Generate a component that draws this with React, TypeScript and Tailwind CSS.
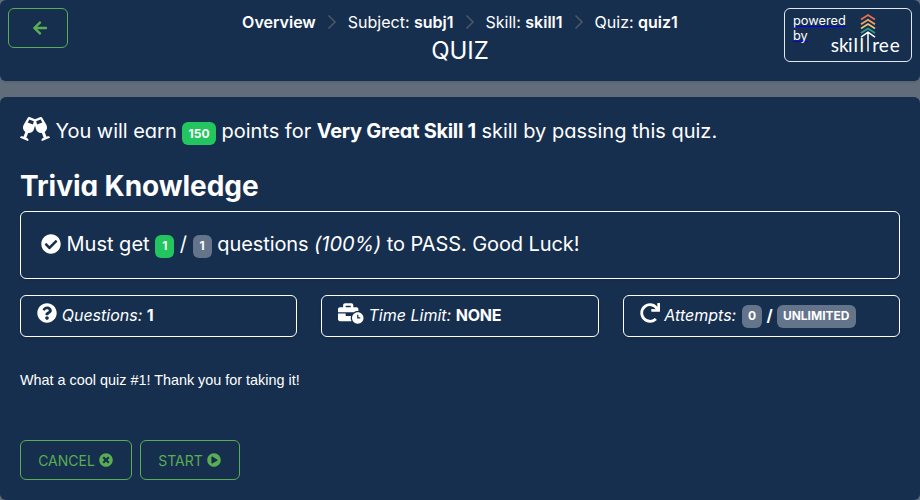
import type { ReactNode } from 'react';
import { FaArrowLeft, FaGlassCheers, FaCheckCircle, FaQuestionCircle, FaBusinessTime, FaRedo, FaTimesCircle, FaPlayCircle } from 'react-icons/fa';

function Separator() {
  return (
    <svg className="mx-[11px] h-4 w-[10px]" viewBox="0 0 10 16" fill="none" stroke="#4b5563" strokeWidth="1.7">
      <path d="M1.500 1.500 8 8l-6.500 6.500" />
    </svg>
  );
}

function Crumb({ label, value }: { label?: string; value: string }) {
  return (
    <span className="whitespace-pre">
      {label && `${label}: `}
      <span className="font-semibold">{value}</span>
    </span>
  );
}

function Badge({ children, color = 'bg-[#64748b]' }: { children: ReactNode; color?: string }) {
  return (
    <span className={`inline-flex h-[23px] min-w-[19px] items-center justify-center rounded-md px-[6.3px] text-xs font-bold tracking-normal ${color}`}>
      {children}
    </span>
  );
}

function Logo() {
  return (
    <svg className="h-[42px] w-[72px] shrink-0" viewBox="0 0 72 42" fill="none">
      <g strokeWidth="1.800">
        <path d="M31 6.500 38 2l7 4.500" stroke="#e76f51" />
        <path d="M31 11.200 38 6.700l7 4.500" stroke="#f4a261" />
        <path d="M31 15.600 38 11.100l7 4.500" stroke="#e9c46a" />
        <path d="M31 20 38 15.500l7 4.500" stroke="#2a9d8f" />
        <path d="M31 24.200 38 19.200l7 5M38 20v18.500" stroke="#fff" strokeWidth="1.500" />
      </g>
      <text x="0.800 9 18 23.500 29.500 42.300 48.800 59.800" y="38.500" fill="#fff" className="font-['Lato',sans-serif] text-[19px]">skillree</text>
    </svg>
  );
}

function InfoCard({ icon, label, children }: { icon: ReactNode; label: string; children: ReactNode }) {
  return (
    <div className="flex h-[42px] flex-1 items-center rounded-md border border-white px-4 pb-1 shadow-sm">
      <span className="mr-[4.7px] mb-[2px]">{icon}</span>
      <span className="mt-[2px] mr-[4.5px] italic">{label}:</span>
      <span className="mt-[2px] flex items-center gap-1 font-bold">{children}</span>
    </div>
  );
}

export default function App() {
  return (
    <div className="flex h-[500px] flex-col gap-4 overflow-hidden bg-[#626d7c] font-['Inter',sans-serif] text-base text-white [font-feature-settings:'cv02','cv03','cv04','cv11']">
      <header className="flex h-[81px] shrink-0 items-start justify-between rounded-md bg-[#172f4f] p-2 shadow">
        <div className="w-32">
          <button aria-label="Back" className="flex h-10 w-[60px] items-center justify-center rounded-md border border-[#59ad52] pl-1 text-[#59ad52]">
            <FaArrowLeft size={16} />
          </button>
        </div>
        <div className="flex flex-col items-center pt-[2px]">
          <nav className="flex items-center">
            <Crumb value="Overview" />
            <Separator />
            <Crumb label="Subject" value="subj1" />
            <Separator />
            <Crumb label="Skill" value="skill1" />
            <Separator />
            <Crumb label="Quiz" value="quiz1" />
          </nav>
          <h1 className="mt-px text-2xl leading-8 tracking-[-0.1px]">QUIZ</h1>
        </div>
        <a className="flex h-[54px] w-32 rounded-md border border-[#e2e8f0] pt-1 pl-2">
          <span className="w-[37px] shrink-0 text-[12.8px] leading-[15px] underline decoration-[#0000ee] decoration-1 underline-offset-1 [text-decoration-skip-ink:none]">powered by</span>
          <Logo />
        </a>
      </header>
      <main className="h-[403px] shrink-0 rounded-md bg-[#172f4f] px-5 pt-5">
        <div className="flex h-7 items-center whitespace-pre text-xl tracking-[-0.03px]">
          <FaGlassCheers className="mr-[5.5px] mb-1 h-6 w-[30px]" />
          <span>You will earn </span>
          <span className="mt-[5px] flex"><Badge color="bg-[#22c55e]">150</Badge></span>
          <span className="tracking-normal"> points for <b className="font-bold tracking-[-0.3px]">Very Great Skill 1</b> skill by passing this quiz.</span>
        </div>
        <h2 className="mt-[23px] text-[28px] leading-9 font-bold tracking-[-0.05px]">Trivia Knowledge</h2>
        <div className="mt-[7px] flex h-[68px] items-center whitespace-pre rounded-md border border-white pl-5 pb-[3px] text-xl shadow-sm">
          <FaCheckCircle className="mr-[5.5px] text-[20px]" />
          <span>Must get </span>
          <span className="mt-[5px] flex"><Badge color="bg-[#22c55e]">1</Badge></span>
          <span> / </span>
          <span className="mt-[5px] flex"><Badge>1</Badge></span>
          <span className="tracking-[-0.08px]"> questions <i>(100%)</i> to PASS. Good Luck!</span>
        </div>
        <div className="mt-4 flex gap-6">
          <InfoCard icon={<FaQuestionCircle className="size-5" />} label="Questions">1</InfoCard>
          <InfoCard icon={<FaBusinessTime className="h-[21px] w-[25.5px]" />} label="Time Limit"><span className="tracking-[-0.2px]">NONE</span></InfoCard>
          <InfoCard icon={<FaRedo className="size-5" />} label="Attempts">
            <span className="mt-[2px] ml-px flex"><Badge>0</Badge></span>/<span className="mt-[2px] flex"><Badge>UNLIMITED</Badge></span>
          </InfoCard>
        </div>
        <p className="mt-[33px] font-['Liberation_Sans',sans-serif] text-[14.400px] leading-5">What a cool quiz #1! Thank you for taking it!</p>
        <div className="mt-[50px] flex gap-2 text-[14px] text-[#59ad52]">
          <button className="flex h-10 w-28 items-center justify-center gap-1 rounded-md border border-[#59ad52] pr-px">CANCEL <FaTimesCircle className="mb-px" /></button>
          <button className="flex h-10 w-[100px] items-center justify-center gap-1 rounded-md border border-[#59ad52] pr-px">START <FaPlayCircle className="mb-px" /></button>
        </div>
      </main>
    </div>
  );
}
